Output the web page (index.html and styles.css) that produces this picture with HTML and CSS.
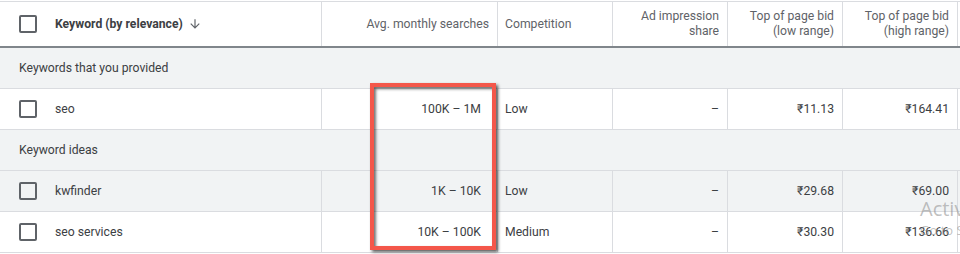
FILE: index.html
```html
<!DOCTYPE html>
<html>
<head>
<meta charset="utf-8">
<link rel="stylesheet" href="styles.css">
</head>
<body>
<div class="table">
  <div class="row head">
    <div class="cell kw"><span class="cb"></span><span class="kwtitle">Keyword (by relevance)</span>
      <svg class="sort" viewBox="0 0 24 24" width="14" height="14"><path d="M20 12l-1.41-1.41L13 16.17V4h-2v12.17l-5.58-5.59L4 12l8 8 8-8z" fill="#5f6368"/></svg>
    </div>
    <div class="cell num">Avg. monthly searches</div>
    <div class="cell txt">Competition</div>
    <div class="cell num">Ad impression<br>share</div>
    <div class="cell num">Top of page bid<br>(low range)</div>
    <div class="cell num">Top of page bid<br>(high range)</div>
    <div class="cell last"></div>
  </div>
  <div class="group">Keywords that you provided</div>
  <div class="row">
    <div class="cell kw"><span class="cb"></span>seo</div>
    <div class="cell num avg">100K – 1M</div>
    <div class="cell txt">Low</div>
    <div class="cell num">–</div>
    <div class="cell num">₹11.13</div>
    <div class="cell num">₹164.41</div>
    <div class="cell last"></div>
  </div>
  <div class="group">Keyword ideas</div>
  <div class="row hover">
    <div class="cell kw"><span class="cb"></span>kwfinder</div>
    <div class="cell num avg">1K – 10K</div>
    <div class="cell txt">Low</div>
    <div class="cell num">–</div>
    <div class="cell num">₹29.68</div>
    <div class="cell num">₹69.00</div>
    <div class="cell last"></div>
  </div>
  <div class="row">
    <div class="cell kw"><span class="cb"></span>seo services</div>
    <div class="cell num avg">10K – 100K</div>
    <div class="cell txt">Medium</div>
    <div class="cell num">–</div>
    <div class="cell num">₹30.30</div>
    <div class="cell num">₹136.66</div>
    <div class="cell last"></div>
  </div>
  <div class="highlight"></div>
  <div class="watermark"><div class="wm1">Activate Windows</div><div class="wm2">Go to Settings to activate Windows.</div></div>
</div>
</body>
</html>
```
FILE: styles.css
```css
html, body {
  margin: 0;
  padding: 0;
  background: #fff;
}
body {
  font-family: Roboto, "Liberation Sans", sans-serif;
  color: #3c4043;
  overflow: hidden;
  width: 960px;
  height: 254px;
}
.table {
  position: relative;
  padding-top: 1px;
}
.row {
  display: grid;
  grid-template-columns: 322px 176px 115px 115px 115px 115px 1fr;
  height: 40px;
  border-bottom: 1px solid #dadce0;
  background: #fff;
  font-size: 12.2px;
}
.row.head {
  border-top: 1px solid #dadce0;
  height: 44px;
  border-bottom: 2px solid #80868b;
  font-size: 12.2px;
  color: #5f6368;
  line-height: 15px;
}
.row.hover {
  background: #f1f3f4;
}
.cell {
  border-right: 1px solid #dadce0;
  display: flex;
  align-items: center;
  white-space: nowrap;
}
.cell.last {
  border-right: none;
}
.cell.kw {
  padding-left: 19px;
}
.cell.num {
  justify-content: flex-end;
  text-align: right;
  padding-right: 8px;
}
.cell.num.avg {
  padding-right: 16px;
}
.cell.txt {
  padding-left: 7px;
}
.cb {
  width: 14px;
  height: 14px;
  border: 2px solid #5f6368;
  border-radius: 2px;
  margin-right: 18px;
  flex: none;
}
.kwtitle {
  font-weight: 700;
  color: #3c4043;
  font-size: 12.2px;
}
.sort {
  margin-left: 5px;
}
.group {
  height: 40px;
  background: #f1f3f4;
  border-bottom: 1px solid #dadce0;
  display: flex;
  align-items: center;
  padding-left: 19px;
  font-size: 12.2px;
  color: #3c4043;
}
.highlight {
  position: absolute;
  left: 370px;
  top: 83px;
  width: 118px;
  height: 159px;
  border: 4px solid #f4574a;
  box-shadow: 2px 2px 3px rgba(0,0,0,0.65), inset 2px 2px 3px rgba(0,0,0,0.55);
}
.watermark {
  position: absolute;
  left: 920px;
  top: 196px;
  color: rgba(140,140,140,0.55);
  font-family: "Open Sans", "DejaVu Sans", sans-serif;
  white-space: nowrap;
}
.wm1 {
  font-size: 20px;
  line-height: 26px;
}
.wm2 {
  font-size: 13px;
  line-height: 16px;
}
```
